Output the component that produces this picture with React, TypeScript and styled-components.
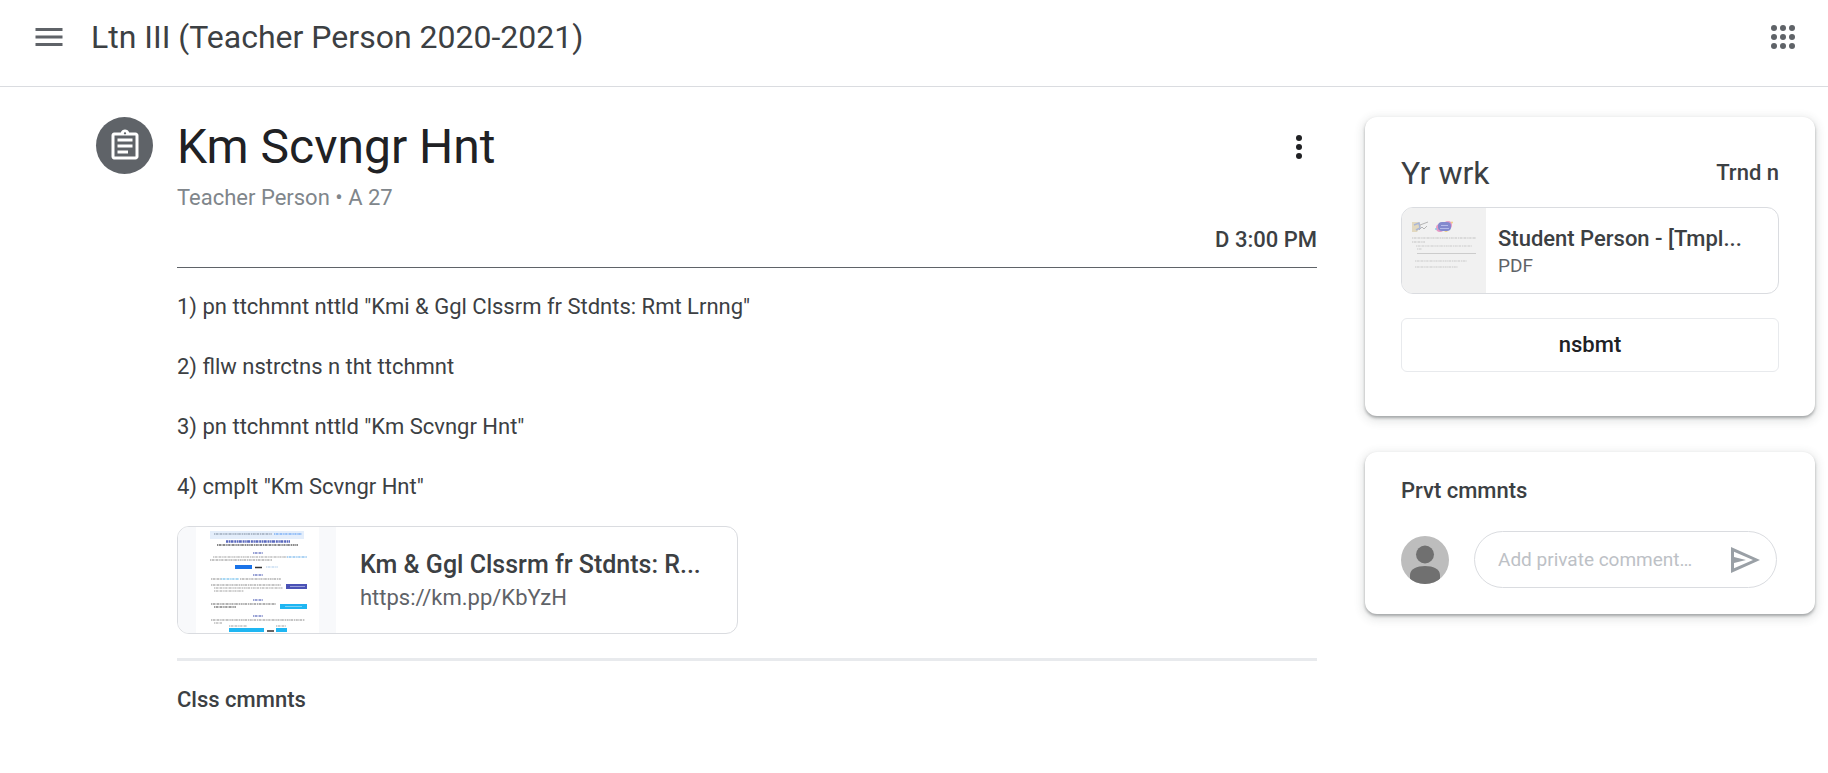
import React from 'react';
import styled, { createGlobalStyle } from 'styled-components';
import { MdMenu, MdOutlineAssignment } from 'react-icons/md';

const GlobalStyle = createGlobalStyle`
  * { box-sizing: border-box; }
  body {
    margin: 0;
    background: #fff;
    color: #3c4043;
    font-family: Roboto, "Liberation Sans", sans-serif;
    font-size: 22px;
    line-height: 30px;
  }
  button, input { font: inherit; }
`;

const Header = styled.header`
  display: flex;
  align-items: center;
  gap: 24px;
  padding: 12px 33px 24px 31px;
  border-bottom: 1px solid #dadce0;
`;

const IconButton = styled.button<{ $color?: string }>`
  display: flex;
  flex: none;
  padding: 0;
  border: 0;
  background: none;
  color: ${(p) => p.$color ?? '#5f6368'};
  cursor: pointer;
`;

const CourseLink = styled.a`
  flex: 1;
  color: #3c4043;
  font-size: 32px;
  line-height: 50px;
  text-decoration: none;
`;

const Page = styled.div`
  display: flex;
  align-items: flex-start;
  gap: 48px;
  padding: 30px 13px 36px 96px;
`;

const Main = styled.main`
  display: flex;
  flex: 1;
  min-width: 0;
  gap: 24px;
`;

const Badge = styled.div`
  display: flex;
  flex: none;
  align-items: center;
  justify-content: center;
  width: 57px;
  height: 57px;
  border-radius: 50%;
  background: #5f6368;
  color: #fff;
`;

const Assignment = styled.article`
  flex: 1;
  min-width: 0;
`;

const TitleRow = styled.div`
  display: flex;
  align-items: center;
  justify-content: space-between;
  padding-right: 15px;
`;

const Title = styled.h1`
  margin: 0;
  color: #202124;
  font-size: 48px;
  font-weight: 400;
  line-height: 60px;
`;

const Byline = styled.p`
  margin: 6px 0 12px;
  color: #80868b;
`;

const Due = styled.p`
  margin: 0;
  padding-bottom: 12px;
  border-bottom: 1px solid #5f6368;
  font-weight: 500;
  text-align: right;
`;

const Steps = styled.div`
  display: flex;
  flex-direction: column;
  gap: 30px;
  margin: 24px 0;
`;

const Step = styled.p`
  margin: 0;
`;

const Attachment = styled.a`
  display: flex;
  overflow: hidden;
  border: 1px solid #dadce0;
  border-radius: 12px;
  color: #3c4043;
  text-decoration: none;
`;

const LinkAttachment = styled(Attachment)`
  max-width: 561px;
  height: 108px;
`;

const FileAttachment = styled(Attachment)`
  height: 87px;
  margin-top: 14px;
`;

const Thumb = styled.svg`
  display: block;
  flex: none;
`;

const AttachmentText = styled.span<{ $inset: number }>`
  display: flex;
  flex: 1;
  flex-direction: column;
  justify-content: center;
  min-width: 0;
  padding: 0 ${(p) => p.$inset}px;
`;

const AttachmentName = styled.span<{ $large?: boolean }>`
  overflow: hidden;
  font-size: ${(p) => (p.$large ? 25 : 22)}px;
  font-weight: 500;
  line-height: ${(p) => (p.$large ? 36 : 30)}px;
  white-space: nowrap;
`;

const AttachmentMeta = styled.span<{ $small?: boolean }>`
  color: #5f6368;
  font-size: ${(p) => (p.$small ? 19 : 22)}px;
  line-height: ${(p) => (p.$small ? 24 : 30)}px;
`;

const Divider = styled.hr`
  height: 3px;
  margin: 24px 0;
  border: 0;
  background: #e8eaed;
`;

const SectionTitle = styled.h2`
  margin: 0;
  font-size: 22px;
  font-weight: 500;
`;

const Sidebar = styled.aside`
  display: flex;
  flex: none;
  flex-direction: column;
  gap: 36px;
  width: 450px;
`;

const Panel = styled.section`
  padding: 36px 36px 44px;
  border-radius: 12px;
  background: #fff;
  box-shadow: 0 2px 3px rgba(60, 64, 67, 0.4), 0 3px 9px 3px rgba(60, 64, 67, 0.12);
`;

const CommentPanel = styled(Panel)`
  padding: 24px 38px 26px 36px;
`;

const PanelHead = styled.div`
  display: flex;
  align-items: center;
  justify-content: space-between;
`;

const PanelTitle = styled.h2`
  margin: 0;
  font-size: 32px;
  font-weight: 400;
  line-height: 40px;
`;

const Status = styled.span`
  font-weight: 500;
`;

const SubmitButton = styled.button`
  display: block;
  width: 100%;
  height: 54px;
  margin-top: 24px;
  border: 1px solid #e8eaed;
  border-radius: 6px;
  background: #fff;
  color: #202124;
  font-weight: 500;
  cursor: pointer;
`;

const CommentRow = styled.form`
  display: flex;
  align-items: center;
  gap: 25px;
  margin-top: 25px;
`;

const CommentBox = styled.div`
  display: flex;
  flex: 1;
  align-items: center;
  min-width: 0;
  height: 57px;
  padding: 0 16px 0 23px;
  border: 1px solid #dadce0;
  border-radius: 29px;
`;

const CommentInput = styled.input`
  flex: 1;
  min-width: 0;
  padding: 0;
  border: 0;
  outline: 0;
  background: none;
  color: #3c4043;
  font-size: 19px;

  &::placeholder {
    color: #bdc1c6;
    opacity: 1;
  }
`;

const AppsIcon = () => (
  <svg width="24" height="24" viewBox="0 0 24 24" fill="currentColor" aria-hidden="true">
    {[3, 12, 21].map((y) => [3, 12, 21].map((x) => <circle key={`${x}-${y}`} cx={x} cy={y} r="3" />))}
  </svg>
);

const MoreIcon = () => (
  <svg width="6" height="24" viewBox="0 0 6 24" fill="currentColor" aria-hidden="true">
    {[3, 12, 21].map((y) => (
      <circle key={y} cx="3" cy={y} r="3" />
    ))}
  </svg>
);

const SendIcon = () => (
  <svg width="29" height="26" viewBox="0 0 29 26" fill="currentColor" aria-hidden="true">
    <path fillRule="evenodd" d="M0 0 29 13 0 26ZM3 4.7V10L15 13 3 16V21.3L22 13Z" />
  </svg>
);

const Avatar = () => (
  <Thumb width="48" height="48" viewBox="0 0 48 48" aria-hidden="true">
    <defs>
      <clipPath id="avatar">
        <circle cx="24" cy="24" r="24" />
      </clipPath>
    </defs>
    <g clipPath="url(#avatar)">
      <rect width="48" height="48" fill="#bdbdbd" />
      <circle cx="24" cy="18.5" r="9" fill="#707070" />
      <path d="M9 48V39C9 33 16 30 24 30S39 33 39 39V48Z" fill="#707070" />
    </g>
  </Thumb>
);

type Run = [x: number, y: number, w: number, color: string];

/* Rows of miniature print: start, vertical centre, length, colour. */
const articleRuns: Run[] = [
  [36, 7, 58, '#8795a8'],
  [96, 7, 28, '#5c9df5'],
  [39, 18, 81, '#333'],
  [75, 26, 10, '#4b5bb5'],
  [35, 30, 74, '#aaa'],
  [109, 30, 20, '#6fb3ec'],
  [32, 33, 62, '#999'],
  [88, 40, 12, '#b5d2ee'],
  [75, 48, 10, '#4b5bb5'],
  [33, 52, 10, '#999'],
  [43, 52, 18, '#64b9ea'],
  [62, 52, 41, '#999'],
  [33, 58, 70, '#999'],
  [36, 61, 69, '#aaa'],
  [36, 64, 30, '#aaa'],
  [75, 73, 10, '#4b5bb5'],
  [33, 77, 65, '#777'],
  [36, 80, 22, '#555'],
  [75, 89, 10, '#4b5bb5'],
  [33, 93, 94, '#999'],
  [36, 96, 8, '#aaa'],
  [51, 99, 18, '#aaa'],
  [98, 99, 10, '#aaa'],
];

const worksheetRuns: Run[] = [
  [10, 30, 64, '#b3b3b3'],
  [10, 34, 13, '#b3b3b3'],
  [14, 38, 56, '#bdbdbd'],
  [15, 41, 5, '#bdbdbd'],
  [13, 53, 52, '#bdbdbd'],
  [13, 59, 43, '#bdbdbd'],
];

const Print = ({ runs, weight }: { runs: Run[]; weight: number }) => (
  <g opacity="0.75">
    {runs.map(([x, y, w, color]) => (
      <path key={`${x}-${y}`} d={`M${x} ${y}h${w}`} stroke={color} strokeWidth={weight} strokeDasharray="1.4 .6 2 .5 .8 .5 2.6 .8" />
    ))}
  </g>
);

const ArticleThumb = () => (
  <Thumb width="158" height="106" viewBox="0 0 158 106" aria-hidden="true">
    <rect width="158" height="106" fill="#f8f9fb" />
    <rect x="18" width="123" height="106" fill="#fff" />
    <rect x="32" y="4" width="94" height="8" fill="#e4eefb" />
    <path d="M48 14.5h64" stroke="#5a68bd" strokeWidth="2.6" strokeDasharray="2 .6 1.4 .5 3 .8" />
    <Print runs={articleRuns} weight={1.4} />
    <rect x="57" y="38" width="17" height="4" fill="#1a73e8" />
    <path d="M77 40.5h7M89 104h7" stroke="#333" strokeWidth="1.5" />
    <rect x="108" y="57" width="21" height="5" fill="#4a52b5" />
    <path d="M112 59.5h15" stroke="#9aa0dc" />
    <rect x="102" y="77" width="27" height="5" fill="#1fb6f2" />
    <path d="M107 79.5h17" stroke="#7dd3f7" />
    <rect x="51" y="101" width="35" height="4" fill="#1fb6f2" />
    <rect x="98" y="101" width="11" height="4" fill="#1fb6f2" />
  </Thumb>
);

const WorksheetThumb = () => (
  <Thumb width="84" height="85" viewBox="0 0 84 85" aria-hidden="true">
    <rect width="84" height="85" fill="#f1f1f1" />
    <path d="M10 14h7l2 4-4 6h-5Z" fill="#e2d8bf" />
    <path d="M12 17l5-2 1 5-4 2" fill="none" stroke="#aab6d6" strokeWidth="1.5" />
    <path d="M18 17l8-3M17 22l3-3 2 2 3-3" fill="none" stroke="#b5b5b5" />
    <circle cx="38" cy="20" r="4" fill="#e69ac5" />
    <circle cx="46" cy="17" r="4" fill="#e69ac5" />
    <circle cx="44" cy="22" r="2" fill="#efcf84" />
    <rect x="36" y="14" width="13" height="9" rx="4" fill="#8389ce" />
    <path d="M39 17.5h7M38 20.5h9" stroke="#b5baea" />
    <circle cx="50" cy="14.5" r="1" fill="#efcf84" />
    <circle cx="34" cy="21" r="1" fill="#8bcbe6" />
    <Print runs={worksheetRuns} weight={1.2} />
    <path d="M15 45.5h59" stroke="#ccc" />
  </Thumb>
);

const steps = [
  '1) pn ttchmnt nttld "Kmi & Ggl Clssrm fr Stdnts: Rmt Lrnng"',
  '2) fllw nstrctns n tht ttchmnt',
  '3) pn ttchmnt nttld "Km Scvngr Hnt"',
  '4) cmplt "Km Scvngr Hnt"',
];

export default function App() {
  return (
    <>
      <GlobalStyle />
      <Header>
        <IconButton type="button" aria-label="Main menu">
          <MdMenu size={36} />
        </IconButton>
        <CourseLink href="#course">Ltn III (Teacher Person 2020-2021)</CourseLink>
        <IconButton type="button" aria-label="Apps">
          <AppsIcon />
        </IconButton>
      </Header>
      <Page>
        <Main>
          <Badge>
            <MdOutlineAssignment size={36} />
          </Badge>
          <Assignment>
            <TitleRow>
              <Title>Km Scvngr Hnt</Title>
              <IconButton type="button" aria-label="More options" $color="#202124">
                <MoreIcon />
              </IconButton>
            </TitleRow>
            <Byline>Teacher Person • A 27</Byline>
            <Due>D 3:00 PM</Due>
            <Steps>
              {steps.map((step) => (
                <Step key={step}>{step}</Step>
              ))}
            </Steps>
            <LinkAttachment href="#link">
              <ArticleThumb />
              <AttachmentText $inset={24}>
                <AttachmentName $large>Km &amp; Ggl Clssrm fr Stdnts: R...</AttachmentName>
                <AttachmentMeta>https://km.pp/KbYzH</AttachmentMeta>
              </AttachmentText>
            </LinkAttachment>
            <Divider />
            <SectionTitle>Clss cmmnts</SectionTitle>
          </Assignment>
        </Main>
        <Sidebar>
          <Panel>
            <PanelHead>
              <PanelTitle>Yr wrk</PanelTitle>
              <Status>Trnd n</Status>
            </PanelHead>
            <FileAttachment href="#file">
              <WorksheetThumb />
              <AttachmentText $inset={12}>
                <AttachmentName>Student Person - [Tmpl...</AttachmentName>
                <AttachmentMeta $small>PDF</AttachmentMeta>
              </AttachmentText>
            </FileAttachment>
            <SubmitButton type="button">nsbmt</SubmitButton>
          </Panel>
          <CommentPanel>
            <SectionTitle>Prvt cmmnts</SectionTitle>
            <CommentRow>
              <Avatar />
              <CommentBox>
                <CommentInput type="text" aria-label="Add private comment" placeholder="Add private comment…" />
                <IconButton type="button" aria-label="Post comment" $color="#9aa0a6">
                  <SendIcon />
                </IconButton>
              </CommentBox>
            </CommentRow>
          </CommentPanel>
        </Sidebar>
      </Page>
    </>
  );
}
